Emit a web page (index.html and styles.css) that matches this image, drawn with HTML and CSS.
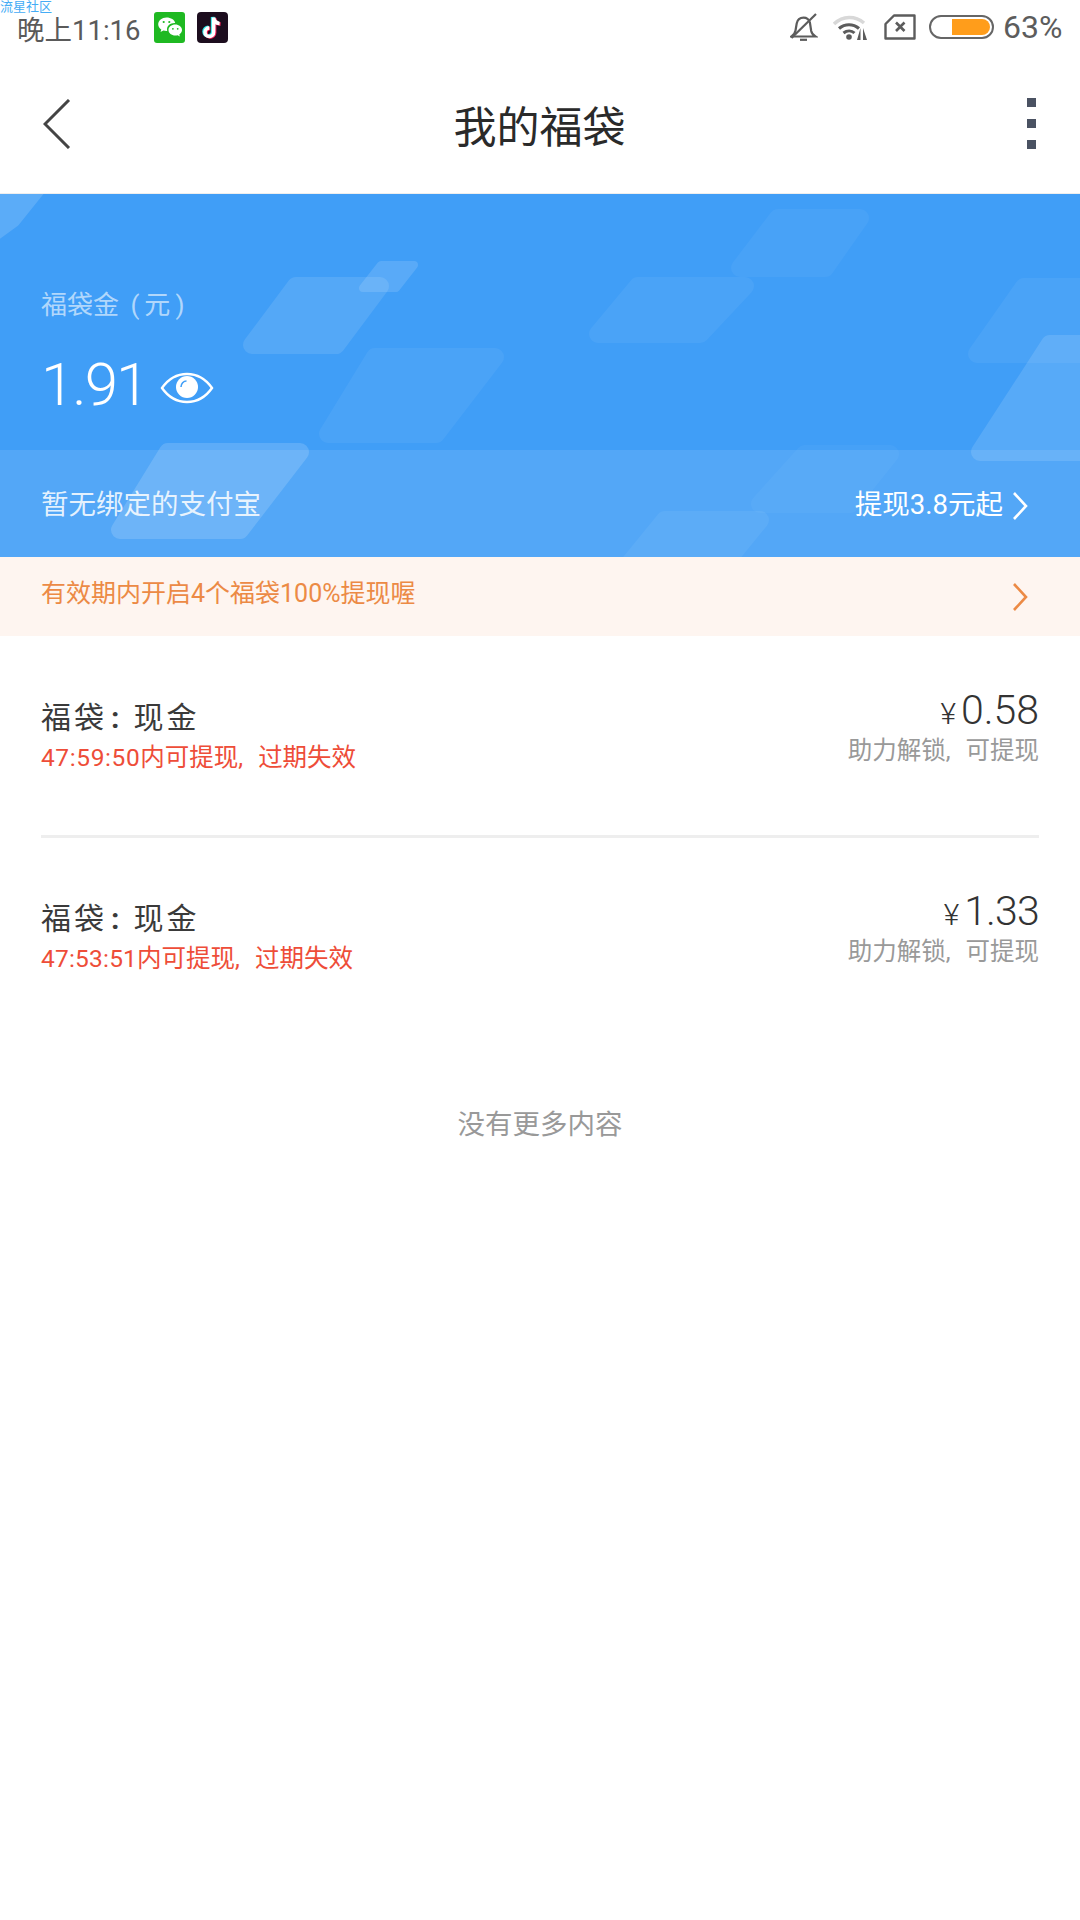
FILE: index.html
```html
<!DOCTYPE html>
<html lang="zh-CN">
<head>
    <meta charset="UTF-8">
    <title>我的福袋</title>
    <link rel="stylesheet" href="styles.css">
</head>
<body>
<div class="watermark">流星社区</div>

<div class="status">
    <div class="status-left">
        <span class="time">晚上11:16</span>
        <svg class="app-icon" viewBox="0 0 31 31">
            <rect width="31" height="31" rx="3" fill="#1fb922"/>
            <path d="M12.500 5.500c-4.600 0-8.300 3-8.300 6.800 0 2.200 1.200 4 3.100 5.300l-.8 2.500 2.900-1.500c1 .3 2 .5 3.100.5h.8c-.2-.6-.3-1.200-.3-1.800 0-3.500 3.300-6.300 7.500-6.300h.7c-.7-3.200-4.200-5.500-8.700-5.500z" fill="#fff"/>
            <path d="M28 18.100c0-3.100-3.100-5.500-6.700-5.500-3.800 0-6.800 2.400-6.800 5.500s3 5.500 6.800 5.500c.8 0 1.600-.1 2.300-.3l2.300 1.200-.6-2c1.600-1.100 2.700-2.600 2.700-4.400z" fill="#fff"/>
            <circle cx="9.700" cy="10" r="1.100" fill="#1fb922"/>
            <circle cx="15.300" cy="10" r="1.100" fill="#1fb922"/>
            <circle cx="18.900" cy="16.800" r=".9" fill="#1fb922"/>
            <circle cx="23.700" cy="16.800" r=".9" fill="#1fb922"/>
        </svg>
        <svg class="app-icon" viewBox="0 0 31 31">
            <rect width="31" height="31" rx="4" fill="#1c0d1e"/>
            <g fill="none" stroke-width="3.600">
                <path d="M16.600 5.500v14.700a4.300 4.300 0 1 1-4.300-4.300M16.600 5.500c.3 3.400 2.500 5.700 6 6" stroke="#25e5e8" transform="translate(-1 -.6)"/>
                <path d="M16.600 5.500v14.700a4.300 4.300 0 1 1-4.300-4.300M16.600 5.500c.3 3.400 2.500 5.700 6 6" stroke="#f4245a" transform="translate(1 .6)"/>
                <path d="M16.600 5.500v14.700a4.300 4.300 0 1 1-4.300-4.300M16.600 5.500c.3 3.400 2.500 5.700 6 6" stroke="#fff"/>
            </g>
        </svg>
    </div>
    <div class="status-right">
        <svg class="bell" viewBox="0 0 28 28" fill="none" stroke="#5c5c5c" stroke-width="2.200">
            <path d="M1.500 23.500c2.500-1.500 3.500-3 4-6l1.200-7C7.400 7 10.200 4.700 13.500 4.700c3 0 5.500 2 6.400 4.800l1.300 8.500c.5 2.500 2 4.200 4.300 5.500z"/>
            <path d="M1.500 25L26 1"/>
            <path d="M10 26.800h7" stroke-width="2.200"/>
        </svg>
        <svg class="wifi" viewBox="0 0 36 26" fill="none">
            <path d="M1 10C10 1.500 22 1.500 31 9" stroke="#d8d8d8" stroke-width="3.500"/>
            <path d="M6 14.500c6-5 14-5 20 0" stroke="#5c5c5c" stroke-width="3.200"/>
            <path d="M10.500 19c3.500-2.800 8-2.800 11 0" stroke="#5c5c5c" stroke-width="3"/>
            <circle cx="16" cy="23" r="2.800" fill="#5c5c5c"/>
            <path d="M27.500 14v12h-3.500zM30 14v12h4z" fill="#5c5c5c"/>
        </svg>
        <svg class="sim" viewBox="0 0 32 26" fill="none" stroke="#5c5c5c">
            <path d="M10 1.500h20.500v23H1.500V10z" stroke-width="2.400" stroke-linejoin="round"/>
            <path d="M12 8.500l8.500 8.500M20.500 8.500L12 17" stroke-width="2.600"/>
        </svg>
        <div class="battery"><div class="battery-fill"></div></div>
        <span class="percent">63%</span>
    </div>
</div>

<div class="header">
    <div class="header-side">
        <svg class="back" viewBox="0 0 28 50" fill="none" stroke="#444" stroke-width="3">
            <path d="M26 1L2 25l24 24"/>
        </svg>
    </div>
    <div class="title">我的福袋</div>
    <div class="header-side header-side-right">
        <div class="more"><i></i><i></i><i></i></div>
    </div>
</div>

<div class="banner">
    <svg class="banner-bg" viewBox="0 0 1080 363" fill="#fff" stroke="#fff" stroke-width="18" stroke-linejoin="round">
        <polygon points="-30,-20 48,-20 12,25 -30,55" opacity=".14"/>
        <polygon points="252,151 296,92 380,92 336,151" opacity=".1"/>
        <polygon points="363,94 381,71 414,71 396,94" opacity=".13" stroke-width="8"/>
        <polygon points="328,240 375,163 495,163 436,240" opacity=".05"/>
        <polygon points="120,336 168,258 300,258 240,336" opacity=".15"/>
        <polygon points="598,140 638,92 745,92 700,140" opacity=".05"/>
        <polygon points="740,74 778,24 860,24 825,74" opacity=".04"/>
        <polygon points="977,160 1024,93 1100,93 1100,160" opacity=".05"/>
        <polygon points="980,258 1050,150 1100,150 1100,258" opacity=".12"/>
        <polygon points="625,375 665,326 760,326 720,375" opacity=".05"/>
        <polygon points="760,310 805,260 890,260 850,310" opacity=".03"/>
    </svg>
    <div class="wallet">
        <div class="wallet-label">福袋金 <span class="paren">(</span>元<span class="paren">)</span></div>
        <div class="wallet-amount">
            <span>1.91</span>
            <svg class="eye" viewBox="0 0 54 32" fill="none">
                <path d="M2 16C9 6 18 2 27 2s18 4 25 14c-7 10-16 14-25 14S9 26 2 16z" stroke="#fff" stroke-width="2.400"/>
                <circle cx="27" cy="15" r="11" fill="#fff"/>
                <path d="M21 15c0-3.500 2.500-6 5.500-6" stroke="#409ef7" stroke-width="1.600"/>
            </svg>
        </div>
    </div>
    <div class="bind">
        <span>暂无绑定的支付宝</span>
        <div class="bind-link">
            <span>提现3.8元起</span>
            <svg class="arrow" viewBox="0 0 16 30" fill="none" stroke="#fff" stroke-width="2.600">
                <path d="M2 2l12 13L2 28"/>
            </svg>
        </div>
    </div>
</div>

<div class="tip">
    <span class="tip-text">有效期内开启4个福袋100%提现喔</span>
    <svg class="arrow" viewBox="0 0 16 30" fill="none" stroke="#ec8a45" stroke-width="2.600">
        <path d="M2 2l12 13L2 28"/>
    </svg>
</div>

<div class="list">
    <div class="item">
        <div class="item-left">
            <div class="item-title">福袋<span class="colon">:</span>现金</div>
            <div class="item-time"><span class="digits">47:59:50</span>内可提现<span class="comma">,</span>过期失效</div>
        </div>
        <div class="item-right">
            <div class="item-amount"><span class="yen">¥</span>0.58</div>
            <div class="item-note">助力解锁<span class="comma">,</span>可提现</div>
        </div>
    </div>
    <div class="item">
        <div class="item-left">
            <div class="item-title">福袋<span class="colon">:</span>现金</div>
            <div class="item-time"><span class="digits digits-narrow">47:53:51</span>内可提现<span class="comma">,</span>过期失效</div>
        </div>
        <div class="item-right">
            <div class="item-amount"><span class="yen">¥</span><span class="amount-narrow">1.33</span></div>
            <div class="item-note">助力解锁<span class="comma">,</span>可提现</div>
        </div>
    </div>
</div>

<div class="no-more">没有更多内容</div>
</body>
</html>
```

FILE: styles.css
```css
body{ margin:0; background:#fff; font-family:Roboto,"Noto Sans CJK SC",sans-serif; color:#333; position:relative; }
.watermark{ position:absolute; top:0; left:0; font-size:13px; line-height:14px; color:#45acf5; }

.status{ height:54px; display:flex; justify-content:space-between; align-items:flex-start; }
.status-left{ display:flex; align-items:center; height:56px; padding-left:17px; }
.time{ font-size:27.500px; color:#5a5a5a; margin-right:14px; }
.app-icon{ width:31px; height:31px; margin-right:12px; position:relative; top:-1px; }
.status-right{ display:flex; align-items:center; height:54px; padding-right:17px; color:#5c5c5c; }
.bell{ width:28px; height:28px; margin-right:15px; }
.wifi{ width:36px; height:26px; margin-right:15px; }
.sim{ width:32px; height:26px; margin-right:13px; }
.battery{ width:65px; height:24px; box-sizing:border-box; border:2px solid #666; border-radius:12px; padding:2px; display:flex; justify-content:flex-end; margin-right:9px; }
.battery-fill{ width:38px; background:#ff9d1b; border-radius:0 9px 9px 0; }
.percent{ font-size:32px; width:60px; }

.header{ height:139px; border-bottom:1px solid #eee; display:flex; align-items:center; padding:0 44px 0 43px; }
.header-side{ flex:1; display:flex; }
.header-side-right{ justify-content:flex-end; }
.back{ width:28px; height:50px; }
.title{ font-size:43px; color:#2a2a2a; }
.more{ width:9px; display:flex; flex-direction:column; gap:12px; }
.more i{ display:block; width:9px; height:9px; background:#4a5262; }

.banner{ background:#409ef7; height:363px; position:relative; overflow:hidden; display:flex; flex-direction:column; }
.banner-bg{ position:absolute; top:0; left:0; width:1080px; height:363px; }
.wallet{ height:256px; padding:93px 0 0 41px; box-sizing:border-box; position:relative; }
.wallet-label{ font-size:26px; line-height:36px; color:rgba(255,255,255,.6); }
.paren{ margin:0 5px; }
.wallet-amount{ display:flex; align-items:center; margin-top:27px; font-size:60px; line-height:70px; font-weight:300; color:#fff; letter-spacing:-2px; }
.eye{ width:54px; height:32px; margin:6px 0 0 13px; }
.bind{ flex:1; background:rgba(255,255,255,.1); display:flex; justify-content:space-between; align-items:center; padding:0 52px 0 41px; font-size:27.500px; color:rgba(255,255,255,.85); position:relative; }
.bind > span{ position:relative; top:-2px; }
.bind-link{ display:flex; align-items:center; color:#fff; }
.bind-link span{ position:relative; top:-2px; }
.arrow{ width:16px; height:30px; margin-left:9px; }
.bind-link .arrow{ position:relative; top:2px; }

.tip{ background:#fef5f0; height:79px; display:flex; justify-content:space-between; align-items:center; padding:0 52px 0 41px; }
.tip-text{ font-size:25px; color:#ec8a45; position:relative; top:-6px; }

.list{ padding:0 41px; }
.item{ height:199px; box-sizing:border-box; padding-top:51px; display:flex; justify-content:space-between; align-items:flex-start; }
.item + .item{ border-top:3px solid #eee; height:180px; padding-top:50px; }
.item-left{ margin-top:11px; }
.item-title{ font-size:30px; line-height:40px; letter-spacing:3px; color:#3a3a3a; }
.colon{ margin:0 14px 0 4px; letter-spacing:0; font-weight:700; }
.item-time{ font-size:24.500px; line-height:40px; color:#ee4d38; }
.digits{ letter-spacing:.6px; }
.digits-narrow{ letter-spacing:.2px; }
.comma{ margin:0 15px 0 0; }
.item-right{ text-align:right; }
.item-amount{ font-size:41px; line-height:46px; font-weight:300; color:#333; }
.amount-narrow{ letter-spacing:-.8px; }
.yen{ font-size:30px; margin-right:5px; }
.item-note{ font-size:24.500px; line-height:36px; color:#999; margin-top:-4px; }

.no-more{ margin-top:90px; text-align:center; font-size:27.500px; line-height:40px; color:#999; }
```
